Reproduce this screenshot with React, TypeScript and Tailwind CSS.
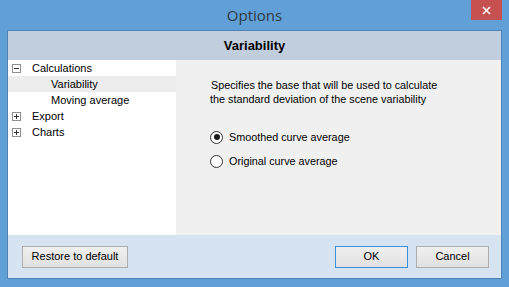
import React from "react";

const font = { fontFamily: '"Liberation Sans", Arial, sans-serif' };

function ExpandBox({ open }: { open: boolean }) {
  return (
    <svg width="9" height="9" viewBox="0 0 9 9" className="shrink-0">
      <rect x="0.5" y="0.5" width="8" height="8" fill="#fff" stroke="#8f8f8f" />
      <path d="M2 4.5H7" stroke="#333" />
      {!open && <path d="M4.5 2V7" stroke="#333" />}
    </svg>
  );
}

function Radio({ checked, label }: { checked: boolean; label: string }) {
  return (
    <div className="flex h-[24px] items-center pl-[34px]">
      <span className="flex h-[13px] w-[13px] items-center justify-center rounded-full border border-[#333] bg-white">
        {checked && <span className="h-[6px] w-[6px] rounded-full bg-[#1a1a1a]" />}
      </span>
      <span className="ml-[6px]">{label}</span>
    </div>
  );
}

function Btn({ label, w, focus }: { label: string; w: string; focus?: boolean }) {
  return (
    <button
      className={`h-[22px] ${w} border bg-gradient-to-b from-[#f0f0f0] to-[#e1e1e1] text-[11px] text-black ${
        focus ? "border-[#3c8fd8]" : "border-[#adadad]"
      }`}
    >
      {label}
    </button>
  );
}

export default function App() {
  return (
    <div className="relative flex h-[287px] w-[509px] flex-col bg-[#61a0d6]" style={font}>
      {/* title bar */}
      <div
        className="flex h-[30px] items-center justify-center text-[15px] text-[#2d3a46]"
        style={{ fontFamily: '"Open Sans", "Liberation Sans", sans-serif' }}
      >
        Options
      </div>
      <div className="absolute left-[471px] top-0 flex h-[20px] w-[31px] items-center justify-center bg-[#c75050]">
        <svg width="9" height="9" viewBox="0 0 9 9">
          <path d="M1 1L8 8M8 1L1 8" stroke="#fff" strokeWidth="1.6" />
        </svg>
      </div>

      {/* client area */}
      <div className="mx-[7px] flex flex-col border border-[#4d83b6]">
        <div className="flex h-[29px] items-center justify-center bg-[#c1cedd] text-[13px] font-bold text-black">
          Variability
        </div>
        <div className="flex h-[175px]">
          {/* tree */}
          <div className="w-[168px] bg-white text-[11px] text-black">
            <div className="flex h-[16px] items-center pl-[4px]">
              <ExpandBox open />
              <span className="ml-[11px]">Calculations</span>
            </div>
            <div className="flex h-[16px] items-center bg-[#ededed] pl-[43px]">Variability</div>
            <div className="flex h-[16px] items-center pl-[43px]">Moving average</div>
            <div className="flex h-[16px] items-center pl-[4px]">
              <ExpandBox open={false} />
              <span className="ml-[11px]">Export</span>
            </div>
            <div className="flex h-[16px] items-center pl-[4px]">
              <ExpandBox open={false} />
              <span className="ml-[11px]">Charts</span>
            </div>
          </div>
          {/* right panel */}
          <div className="flex-1 bg-[#f0f0f0] text-[10.8px] text-black">
            <div className="mt-[18px] leading-[14px]">
              <p className="pl-[35px]">Specifies the base that will be used to calculate</p>
              <p className="pl-[34px]">the standard deviation of the scene variability</p>
            </div>
            <div className="mt-[19px]">
              <Radio checked label="Smoothed curve average" />
              <Radio checked={false} label="Original curve average" />
            </div>
          </div>
        </div>
        <div className="flex h-[43px] items-center bg-[#d6e3f1] pl-[14px] pr-[12px]">
          <Btn label="Restore to default" w="w-[106px]" />
          <div className="flex-1" />
          <Btn label="OK" w="w-[73px]" focus />
          <div className="w-[8px]" />
          <Btn label="Cancel" w="w-[73px]" />
        </div>
      </div>
    </div>
  );
}
